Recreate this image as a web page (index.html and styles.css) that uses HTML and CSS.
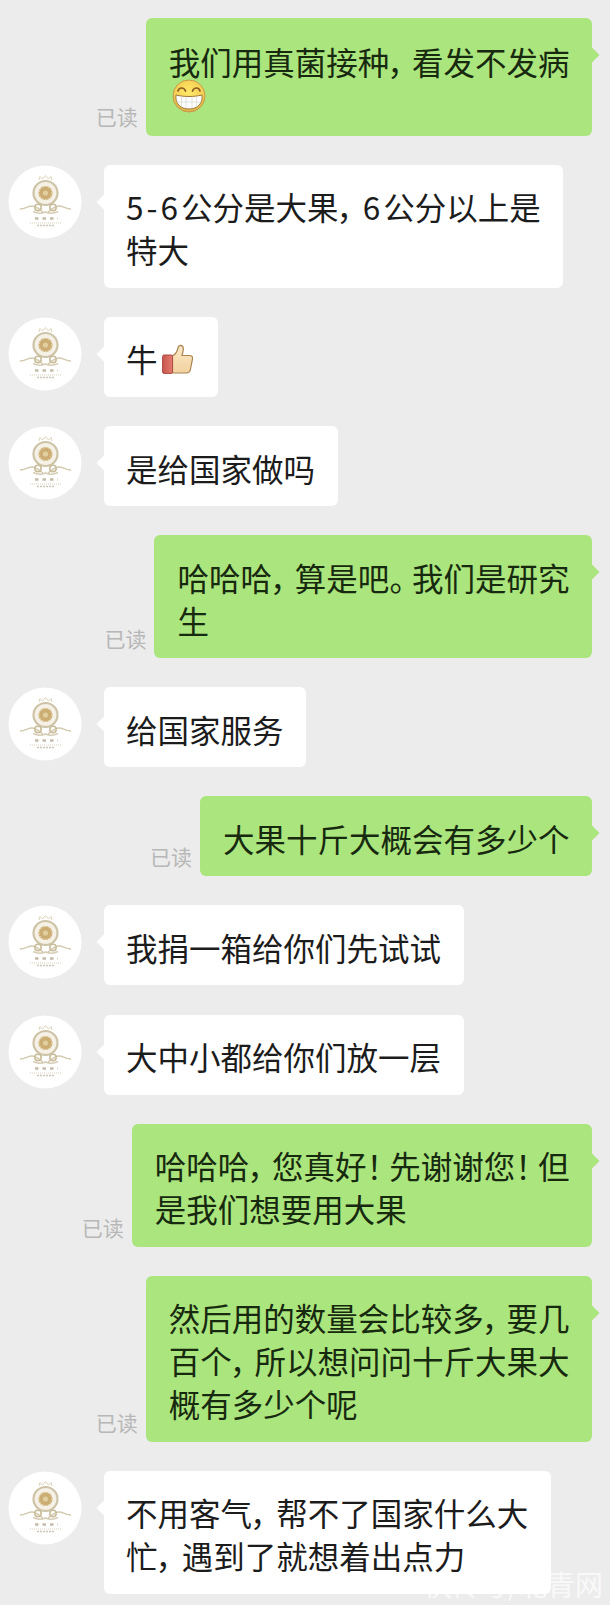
FILE: index.html
```html
<!DOCTYPE html>
<html lang="zh-CN">
<head>
  <meta charset="UTF-8">
  <meta name="viewport" content="width=device-width, initial-scale=1.0">
  <title>聊天记录</title>
  <link rel="stylesheet" href="styles.css">
</head>
<body>
  <svg class="defs" width="0" height="0" aria-hidden="true">
    <symbol id="logo" viewBox="0 0 74 74">
      <circle cx="37" cy="37" r="36.5" fill="#fff"/>
      <!-- crown -->
      <path d="M31 15l1-3.500 2.500 2.500 3-3.500 3 3.500 2.500-2.500 1 3.500" fill="none" stroke="#ddd3b8" stroke-width="1"/>
      <!-- ring and flower -->
      <circle cx="37.500" cy="28" r="12" fill="#f5f1e6" stroke="#cdc3a6" stroke-width="2.200"/>
      <circle cx="37.500" cy="28" r="7" fill="#cbad73"/>
      <circle cx="37.500" cy="28" r="6.500" fill="none" stroke="#e6d7b2" stroke-width="1.200" stroke-dasharray="1.500 1.500"/>
      <circle cx="37.500" cy="28" r="2.600" fill="#e2cf9f"/>
      <!-- ribbons under the ring -->
      <path d="M12 44c5 0 8-3 12-3s7 3 11 6M63 44c-5 0-8-3-12-3s-7 3-11 6" fill="none" stroke="#d2c9ae" stroke-width="1.400"/>
      <circle cx="30" cy="42.500" r="3.200" fill="none" stroke="#c9bd9b" stroke-width="1.600"/>
      <circle cx="45" cy="42.500" r="3.200" fill="none" stroke="#c9bd9b" stroke-width="1.600"/>
      <path d="M25 46.500c4 2 9 2 12.500 .5 3.500 1.500 8.500 1.500 12.500-.5" fill="none" stroke="#d6cdb4" stroke-width="1.500"/>
      <!-- small lettering, too blurred to read -->
      <path d="M27 53.500h23" stroke="#c2bca8" stroke-width="2.400" stroke-dasharray="3.500 4"/>
      <path d="M22 58h32" stroke="#d8d0ba" stroke-width="1.200" stroke-dasharray="1 1"/>
      <path d="M29 60.500h18" stroke="#cbc6b6" stroke-width="1.600" stroke-dasharray="2 1"/>
    </symbol>
  </svg>

  <div class="chat">
    <div class="row row-me">
      <span class="read">已读</span>
      <div class="bubble bubble-me bubble-emoji">我们用真菌接种<span class="punct">，</span>看发不发病<br>
        <svg class="grin" viewBox="0 0 34 34">
          <defs>
            <radialGradient id="face" cx="50%" cy="40%" r="60%">
              <stop offset="0" stop-color="#ffe96a"/>
              <stop offset="0.75" stop-color="#f6cf52"/>
              <stop offset="1" stop-color="#d8a845"/>
            </radialGradient>
          </defs>
          <circle cx="17" cy="17" r="16" fill="url(#face)" stroke="#c79a4a" stroke-width="1"/>
          <path d="M6 12c1-4 6-4 7.500 0M20.500 12c1.500-4 6.500-4 7.500 0" fill="none" stroke="#8a5a22" stroke-width="1.700" stroke-linecap="round"/>
          <path d="M4 16c8 2 18 2 26 0 1 8-4 14-13 14S3 24 4 16z" fill="#fff" stroke="#9c7a3c" stroke-width="1"/>
          <path d="M9.500 17.500v10M14 18v11M20 18v11M24.500 17.500v10M5 23h24" stroke="#d9d9d0" stroke-width="0.800"/>
        </svg>
      </div>
    </div>

    <div class="row row-them">
      <svg class="avatar"><use href="#logo"/></svg>
      <div class="bubble bubble-them"><span class="num">5-6</span>公分是大果<span class="punct">，</span><span class="num">6</span>公分以上是<br>特大</div>
    </div>

    <div class="row row-them">
      <svg class="avatar"><use href="#logo"/></svg>
      <div class="bubble bubble-them bubble-thumb">牛
        <svg class="thumb" viewBox="0 0 31 30">
          <defs>
            <linearGradient id="skin" x1="0" y1="0" x2="0" y2="1">
              <stop offset="0" stop-color="#fbe8c6"/>
              <stop offset="1" stop-color="#f2d2a0"/>
            </linearGradient>
            <linearGradient id="cuff" x1="0" y1="0" x2="1" y2="0">
              <stop offset="0" stop-color="#c9564f"/>
              <stop offset="1" stop-color="#e37a70"/>
            </linearGradient>
          </defs>
          <path d="M10 12c3-1 5-4 6-8 .6-3.500 5-3.500 5.300 .5.200 2.500-.8 5-1.300 7h7.500c2.500 0 3.500 1.800 3 3.500l-2.200 11c-.4 2-1.800 3-3.800 3H12c-1 0-2-.5-2-1z" fill="url(#skin)" stroke="#a98450" stroke-width="1.200"/>
          <rect x="0.600" y="11" width="10" height="18.400" rx="1.500" fill="url(#cuff)" stroke="#a9483f" stroke-width="1"/>
        </svg>
      </div>
    </div>

    <div class="row row-them">
      <svg class="avatar"><use href="#logo"/></svg>
      <div class="bubble bubble-them">是给国家做吗</div>
    </div>

    <div class="row row-me">
      <span class="read">已读</span>
      <div class="bubble bubble-me">哈哈哈<span class="punct">，</span>算是吧<span class="punct">。</span>我们是研究<br>生</div>
    </div>

    <div class="row row-them">
      <svg class="avatar"><use href="#logo"/></svg>
      <div class="bubble bubble-them">给国家服务</div>
    </div>

    <div class="row row-me">
      <span class="read">已读</span>
      <div class="bubble bubble-me">大果十斤大概会有多少个</div>
    </div>

    <div class="row row-them">
      <svg class="avatar"><use href="#logo"/></svg>
      <div class="bubble bubble-them">我捐一箱给你们先试试</div>
    </div>

    <div class="row row-them">
      <svg class="avatar"><use href="#logo"/></svg>
      <div class="bubble bubble-them">大中小都给你们放一层</div>
    </div>

    <div class="row row-me">
      <span class="read">已读</span>
      <div class="bubble bubble-me">哈哈哈<span class="punct">，</span>您真好<span class="punct">！</span>先谢谢您<span class="punct">！</span>但<br>是我们想要用大果</div>
    </div>

    <div class="row row-me">
      <span class="read">已读</span>
      <div class="bubble bubble-me">然后用的数量会比较多<span class="punct">，</span>要几<br>百个<span class="punct">，</span>所以想问问十斤大果大<br>概有多少个呢</div>
    </div>

    <div class="row row-them">
      <svg class="avatar"><use href="#logo"/></svg>
      <div class="bubble bubble-them">不用客气<span class="punct">，</span>帮不了国家什么大<br>忙<span class="punct">，</span>遇到了就想着出点力</div>
    </div>
  </div>

  <div class="watermark">快传号/北青网</div>
</body>
</html>
```

FILE: styles.css
```css
* {
  box-sizing: border-box;
}

html,
body {
  height: 100%;
}

body {
  margin: 0;
  background: #ececec;
  font-family: "Noto Sans CJK SC", "Liberation Sans", sans-serif;
  position: relative;
  overflow: hidden;
}

.defs {
  display: block;
  height: 0;
}

.chat {
  display: flex;
  flex-direction: column;
  gap: 29.1px;
  padding: 18px 18px 0 8px;
}

.row {
  display: flex;
  align-items: flex-start;
}

.row-me {
  justify-content: flex-end;
  align-items: flex-end;
  gap: 8px;
}

.row-them {
  gap: 22px;
}

.avatar {
  flex: none;
  width: 74px;
  height: 74px;
}

.read {
  font-size: 21px;
  line-height: 30px;
  color: #b7b7b7;
  margin-bottom: 5px;
}

.bubble {
  position: relative;
  padding: 20.5px 22.5px 16.5px 22px;
  border-radius: 6px;
  font-size: 31.5px;
  line-height: 43px;
  color: #1c1c1c;
  white-space: nowrap;
  font-feature-settings: "palt";
}

.bubble::after {
  content: "";
  position: absolute;
  top: 31px;
  width: 12px;
  height: 12px;
  transform: rotate(45deg);
  background: inherit;
}

.bubble-me {
  padding-left: 23px;
  background: #abe57d;
  color: #17290f;
}

.bubble-me::after {
  right: -5px;
}

.bubble-them {
  background: #fff;
}

.bubble-them::after {
  left: -5px;
}

/* punctuation sits half width but keeps some air after it */
.punct {
  margin-right: 7px;
}

.bubble-them .punct {
  margin-right: 8.5px;
}

.num {
  letter-spacing: 3px;
}

.bubble-emoji {
  padding-top: 22.25px;
  padding-bottom: 22.5px;
}

.grin {
  display: block;
  width: 34px;
  height: 34px;
  margin: -4px 0 0 3px;
}

.bubble-thumb {
  display: flex;
  align-items: center;
  gap: 4px;
}

.thumb {
  width: 31px;
  height: 30px;
  margin-right: 2.5px;
}

.watermark {
  position: absolute;
  right: 7px;
  bottom: 3px;
  font-size: 28px;
  line-height: 36px;
  color: rgba(255, 255, 255, 0.72);
  white-space: nowrap;
}
```
